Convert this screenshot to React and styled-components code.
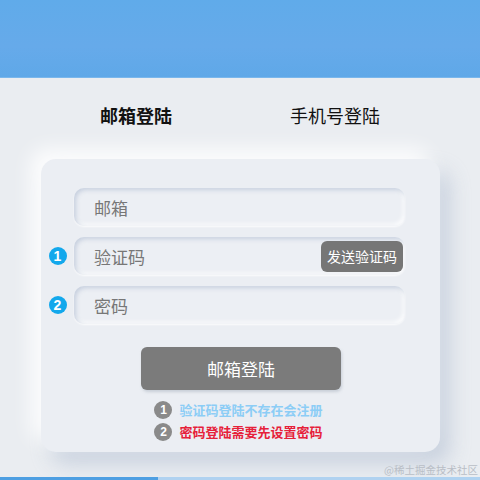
import React from "react";
import styled, { createGlobalStyle } from "styled-components";

const GlobalStyle = createGlobalStyle`
  html, body {
    margin: 0;
    padding: 0;
    background: #eaedf1;
    font-family: "Noto Sans CJK SC", "Noto Sans", sans-serif;
  }
`;

const Page = styled.div`
  width: 480px;
  height: 480px;
  display: flex;
  flex-direction: column;
  position: relative;
  overflow: hidden;
  background: #eaedf1;
`;

const Header = styled.div`
  height: 77px;
  background: linear-gradient(180deg, #60abea 0%, #66aaea 60%, #5fa8e8 100%);
  border-bottom: 1px solid #7ab7ec;
`;

const Tabs = styled.div`
  display: flex;
  height: 76px;
  align-items: center;
  padding-left: 100px;
  gap: 118px;
  box-sizing: border-box;
  padding-bottom: 2px;
`;

const Tab = styled.div`
  font-size: 18px;
  color: #111;
  font-weight: ${({ active }) => (active ? 700 : 400)};
`;

const Card = styled.div`
  margin: 5px 40px 0 41px;
  height: 293px;
  border-radius: 15px;
  background: #ebeef3;
  box-shadow: -10px -10px 20px rgba(255, 255, 255, 0.9),
    10px 12px 20px rgba(190, 200, 216, 0.75);
  padding-top: 29px;
  box-sizing: border-box;
  display: flex;
  flex-direction: column;
`;

const Row = styled.div`
  display: flex;
  align-items: center;
  margin-bottom: 11px;
`;

const Badge = styled.span`
  width: 18px;
  height: 18px;
  border-radius: 50%;
  background: ${({ color }) => color};
  color: #fff;
  font-family: "Liberation Sans", sans-serif;
  font-weight: 700;
  font-size: ${({ small }) => (small ? "12px" : "14px")};
  display: flex;
  align-items: center;
  justify-content: center;
  flex-shrink: 0;
`;

const BadgeSlot = styled.div`
  width: 33px;
  display: flex;
  justify-content: center;
`;

const Field = styled.div`
  width: 331px;
  height: 38px;
  border-radius: 10px;
  background: #eceff4;
  box-shadow: inset 2px 2px 4px rgba(190, 200, 218, 0.8),
    inset -2px -2px 4px rgba(255, 255, 255, 0.9),
    0 1px 2px rgba(255, 255, 255, 0.8);
  display: flex;
  align-items: center;
  justify-content: space-between;
  padding: 0 2px 0 20px;
  box-sizing: border-box;
  font-size: 17px;
  color: #777;
`;

const SendButton = styled.div`
  width: 82px;
  height: 31px;
  border-radius: 6px;
  background: #767676;
  color: #fff;
  font-size: 14px;
  display: flex;
  align-items: center;
  justify-content: center;
`;

const Submit = styled.div`
  align-self: center;
  margin-top: 12px;
  margin-left: 1px;
  width: 200px;
  height: 43px;
  border-radius: 6px;
  background: #7b7b7b;
  color: #fff;
  font-size: 17px;
  display: flex;
  align-items: center;
  justify-content: center;
  box-shadow: 1px 2px 3px rgba(150, 160, 175, 0.4);
`;

const Notes = styled.div`
  margin-top: 11px;
  align-self: center;
  display: flex;
  flex-direction: column;
  gap: 4px;
  margin-left: -4px;
`;

const Note = styled.div`
  display: flex;
  align-items: center;
  gap: 7px;
  font-size: 13px;
  font-weight: 700;
  line-height: 18px;
  color: ${({ color }) => color};
`;

const Footer = styled.div`
  position: absolute;
  left: 0;
  bottom: 0;
  width: 480px;
  height: 3px;
  display: flex;
`;

const FooterPart = styled.div`
  flex: ${({ grow }) => grow};
  background: ${({ color }) => color};
`;

const Watermark = styled.div`
  position: absolute;
  right: 2px;
  bottom: 3px;
  font-size: 10.5px;
  color: #b9bec6;
  font-family: "Noto Sans CJK SC", serif;
`;

export default function App() {
  return (
    <Page>
      <GlobalStyle />
      <Header />
      <Tabs>
        <Tab active>邮箱登陆</Tab>
        <Tab>手机号登陆</Tab>
      </Tabs>
      <Card>
        <Row>
          <BadgeSlot />
          <Field>邮箱</Field>
        </Row>
        <Row>
          <BadgeSlot>
            <Badge color="#13a8ec">1</Badge>
          </BadgeSlot>
          <Field>
            验证码
            <SendButton>发送验证码</SendButton>
          </Field>
        </Row>
        <Row>
          <BadgeSlot>
            <Badge color="#13a8ec">2</Badge>
          </BadgeSlot>
          <Field>密码</Field>
        </Row>
        <Submit>邮箱登陆</Submit>
        <Notes>
          <Note color="#8ccdf6">
            <Badge small color="#8a8a8a">1</Badge>
            验证码登陆不存在会注册
          </Note>
          <Note color="#e6213a">
            <Badge small color="#8a8a8a">2</Badge>
            密码登陆需要先设置密码
          </Note>
        </Notes>
      </Card>
      <Watermark>@稀土掘金技术社区</Watermark>
      <Footer>
        <FooterPart grow={158} color="#4e9fe2" />
        <FooterPart grow={322} color="#b0d2f0" />
      </Footer>
    </Page>
  );
}
